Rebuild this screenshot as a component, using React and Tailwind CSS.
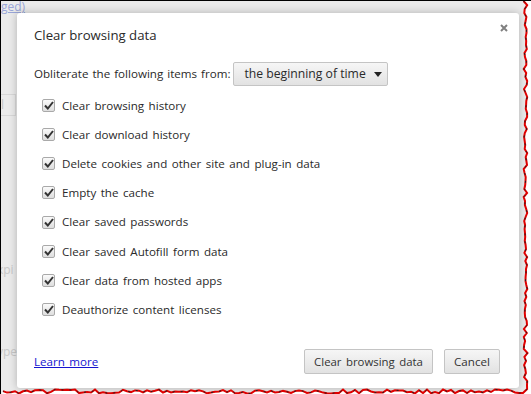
import { useMemo } from "react";

const items = [
  "Clear browsing history",
  "Clear download history",
  "Delete cookies and other site and plug-in data",
  "Empty the cache",
  "Clear saved passwords",
  "Clear saved Autofill form data",
  "Clear data from hosted apps",
  "Deauthorize content licenses",
];

function rand(seed) {
  let s = seed;
  return () => {
    s = (s * 16807) % 2147483647;
    return (s - 1) / 2147483646;
  };
}

// torn paper edge along the right and bottom
function TornEdge() {
  const d = useMemo(() => {
    const r = rand(7);
    const pts = [];
    for (let y = 0; y <= 388; y += 4) pts.push([524.5 + r() * 4 - 2, y]);
    for (let x = 522; x >= 0; x -= 4) pts.push([x, 390.5 + r() * 4 - 2]);
    return pts;
  }, []);
  const line = d.map((p, i) => (i ? "L" : "M") + p[0].toFixed(1) + " " + p[1].toFixed(1)).join(" ");
  const fill = line + " L0 394 L531 394 L531 0 Z";
  return (
    <svg className="absolute inset-0 pointer-events-none" width="531" height="394">
      <path d={fill} fill="#ffffff" />
      <path d={line} fill="none" stroke="#e00000" strokeWidth="2" />
      <path d={line} fill="none" stroke="#222" strokeWidth="1" strokeDasharray="2 6" />
    </svg>
  );
}

function Check() {
  return (
    <span className="w-[13px] h-[13px] shrink-0 border border-[#a9a9a9] rounded-[2px] bg-gradient-to-b from-[#fafafa] to-[#dedede] flex items-center justify-center">
      <svg width="10" height="9" viewBox="0 0 10 9">
        <path d="M1 4.5 L3.8 7.5 L9 1" fill="none" stroke="#333" strokeWidth="2" />
      </svg>
    </span>
  );
}

export default function App() {
  return (
    <div
      className="relative w-[531px] h-[394px] overflow-hidden bg-[#ebebeb] border-t border-l border-black text-[#2a2a2a]"
      style={{ fontFamily: '"Open Sans", "Noto Sans", sans-serif' }}
    >
      {/* faded page behind the dialog */}
      <div className="absolute left-0 top-[-3px] text-[12px] text-[#9aa6d8] underline">ged)</div>
      <div className="absolute left-[-1px] top-[93px] w-[16px] h-[22px] border border-[#d8d8d8] text-[12px] text-[#c4c4c4] leading-[20px] overflow-hidden">l se</div>
      <div className="absolute left-[-4px] top-[260px] text-[12px] text-[#c8c8c8]">xpi</div>
      <div className="absolute left-[-4px] top-[342px] text-[12px] text-[#c8c8c8]">ype</div>

      <div className="pl-[16px] pt-[12px]">
        <div className="w-[502px] h-[375px] bg-white rounded-[3px] shadow-[0_0_8px_rgba(0,0,0,0.25)] relative flex flex-col pl-[17px] pr-[19px] pt-[12px] pb-[14px]">
          <svg className="absolute right-[11px] top-[11px]" width="8" height="8" viewBox="0 0 8 8">
            <path d="M1 1 L7 7 M7 1 L1 7" stroke="#808080" strokeWidth="2" />
          </svg>
          <div className="text-[13.2px] leading-[20px]">Clear browsing data</div>
          <div className="flex items-center gap-[3px] mt-[17px] text-[11.6px]">
            <span className="[word-spacing:1px] whitespace-nowrap">Obliterate the following items from:</span>
            <div className="h-[24px] w-[155px] shrink-0 border border-[#c4c4c4] rounded-[2px] bg-gradient-to-b from-[#f6f6f6] to-[#e2e2e2] flex items-center justify-between pl-[10px] pr-[5px] text-[12.2px] whitespace-nowrap">
              <span>the beginning of time</span>
              <svg width="8" height="5" viewBox="0 0 8 5"><path d="M0 0 H8 L4 5 Z" fill="#222" /></svg>
            </div>
          </div>
          <div className="flex flex-col mt-[5px] pl-[8px]">
            {items.map((t) => (
              <label key={t} className="flex items-center gap-[7px] h-[29.15px] text-[11.6px] [word-spacing:1.5px]">
                <Check />
                <span>{t}</span>
              </label>
            ))}
          </div>
          <div className="mt-auto flex items-center justify-between">
            <a className="text-[#1515d0] underline text-[11.6px] [word-spacing:1.5px]">Learn more</a>
            <div className="flex gap-[11px]">
              <button className="h-[25px] w-[129px] border border-[#c4c4c4] rounded-[2px] bg-gradient-to-b from-[#f6f6f6] to-[#e2e2e2] text-[11.4px] text-[#333] [word-spacing:1.5px]">Clear browsing data</button>
              <button className="h-[25px] w-[56px] border border-[#c4c4c4] rounded-[2px] bg-gradient-to-b from-[#f6f6f6] to-[#e2e2e2] text-[11.6px] text-[#333]">Cancel</button>
            </div>
          </div>
        </div>
      </div>
      <TornEdge />
    </div>
  );
}
